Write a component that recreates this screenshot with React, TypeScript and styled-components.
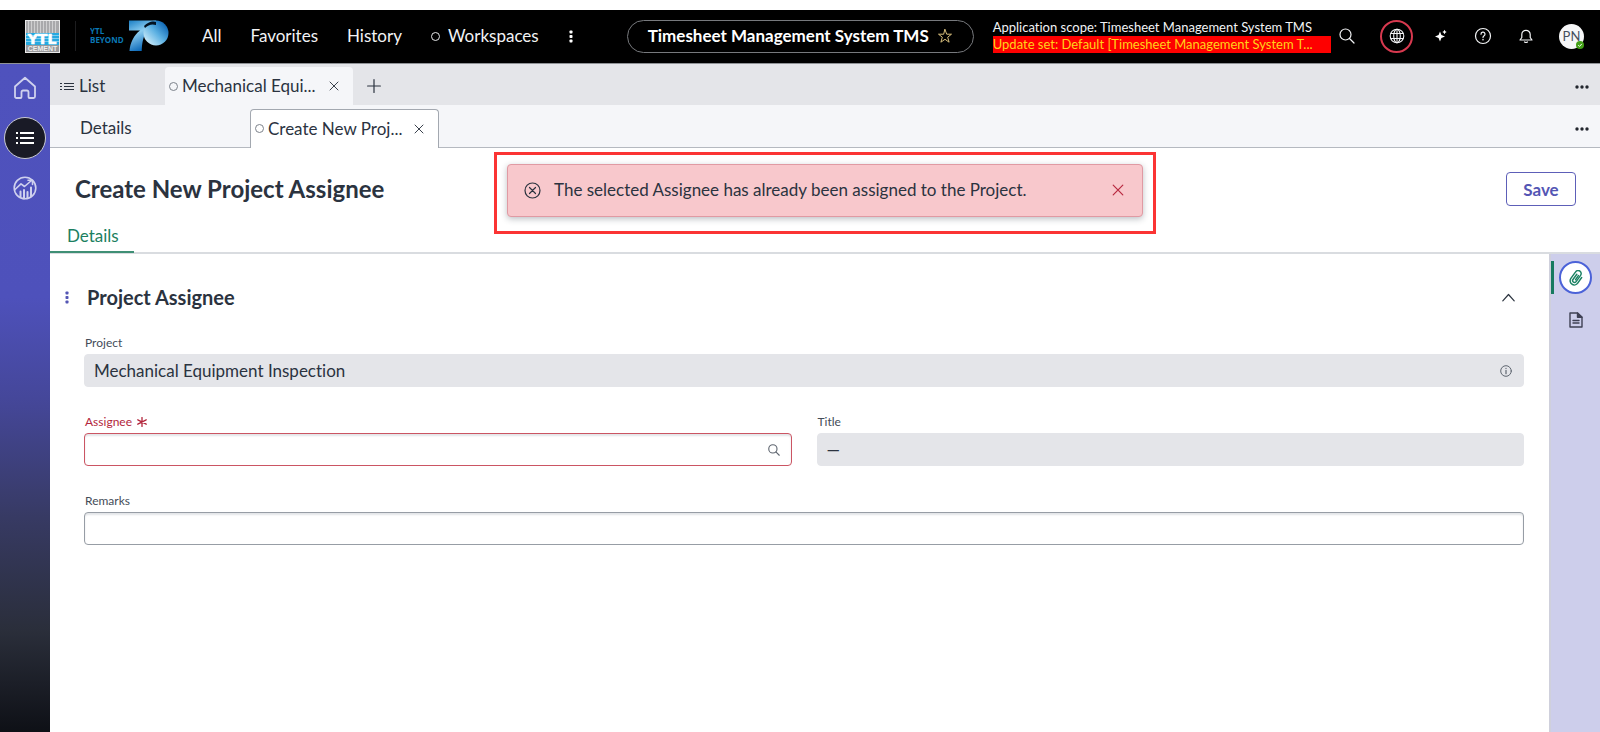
import React from 'react';
import styled, { createGlobalStyle, css } from 'styled-components';

const GlobalStyle = createGlobalStyle`
  *, *::before, *::after { box-sizing: border-box; }
  html, body { margin: 0; background: #fff; }
  body, button, input { font-family: Lato, "Liberation Sans", sans-serif; font-size: 17px; font-variant-ligatures: none; }
  button { margin: 0; padding: 0; border: 0; background: none; color: inherit; cursor: pointer; }
  a { color: inherit; text-decoration: none; }
  h1, h2, p { margin: 0; }
  svg { display: block; flex: none; }
`;

const Page = styled.div`
  display: flex;
  flex-direction: column;
  min-height: 100vh;
  padding-top: 10px;
  color: #2b333f;
  line-height: 20px;
`;

/* Global header */
const Header = styled.header`
  display: flex;
  align-items: center;
  height: 54px;
  padding: 0 16px 1px 25px;
  background: #000;
  border-bottom: 1px solid #8f9296;
  color: #f2f3f5;
  white-space: nowrap;
`;

const LogoDivider = styled.span`
  width: 1px;
  height: 30px;
  margin: 0 14px 0 15px;
  background: #1d1d1f;
`;

const MainNav = styled.nav`
  display: flex;
  align-items: center;
  gap: 29px;
  margin-left: 32px;
`;

const NavLink = styled.a`
  display: flex;
  align-items: center;
  gap: 8px;
`;

const Ring = styled.span<{ $tone: string }>`
  flex: none;
  width: 9px;
  height: 9px;
  border: 1px solid ${(p) => p.$tone};
  border-radius: 50%;
`;

const AppPill = styled.div`
  display: flex;
  align-items: center;
  justify-content: center;
  gap: 8px;
  width: 347px;
  height: 33px;
  margin-left: 53px;
  border: 1px solid #77797d;
  border-radius: 17px;
  color: #fff;
  font-weight: 700;
`;

const Scope = styled.div`
  width: 338px;
  margin-left: 19px;
  font-size: 13px;
  line-height: 17px;
`;

const ScopeLine = styled.p<{ $alert?: boolean }>`
  ${(p) =>
    p.$alert &&
    css`
      background: #fe0000;
      color: #ffd21a;
    `}
`;

const HeaderTools = styled.div`
  display: flex;
  align-items: center;
  flex: 1;
  justify-content: space-between;
  margin-left: 7px;
`;

const ToolButton = styled.button<{ $ringed?: boolean }>`
  display: flex;
  align-items: center;
  justify-content: center;
  width: ${(p) => (p.$ringed ? 33 : 18)}px;
  height: ${(p) => (p.$ringed ? 33 : 18)}px;
  margin-right: ${(p) => (p.$ringed ? -6 : 0)}px;
  border: ${(p) => (p.$ringed ? '2px solid #d8394f' : '0')};
  border-radius: 50%;
`;

const Avatar = styled.button`
  position: relative;
  width: 25px;
  height: 25px;
  border-radius: 50%;
  background: #f6f7f8;
  color: #46505e;
  font-size: 13px;
  line-height: 24px;
`;

const Presence = styled.span`
  position: absolute;
  right: 0;
  bottom: 0;
`;

/* Frame below the header */
const Shell = styled.div`
  display: flex;
  flex: 1;
`;

const Rail = styled.nav`
  display: flex;
  flex: none;
  flex-direction: column;
  align-items: center;
  gap: 8px;
  width: 50px;
  padding-top: 3px;
  background: linear-gradient(#4f52bd 0%, #4e51bb 35%, #45479a 50%, #373a63 68%, #2a2e3a 85%, #0e1016 100%);
`;

const RailLink = styled.a<{ $current?: boolean }>`
  display: flex;
  align-items: center;
  justify-content: center;
  width: 42px;
  height: 42px;
  border: 1px solid ${(p) => (p.$current ? '#c9cad2' : 'transparent')};
  border-radius: 50%;
  background: ${(p) => (p.$current ? '#191a26' : 'transparent')};
  color: ${(p) => (p.$current ? '#fff' : '#cfd1ee')};
`;

const Workspace = styled.main`
  display: flex;
  flex: 1;
  flex-direction: column;
  min-width: 0;
`;

const TabBar = styled.div<{ $nested?: boolean }>`
  display: flex;
  align-items: flex-end;
  height: ${(p) => (p.$nested ? 43 : 41)}px;
  padding-right: 11px;
  background: ${(p) => (p.$nested ? '#f5f6f9' : '#e4e5e9')};
  border-bottom: ${(p) => (p.$nested ? '1px solid #b5b9c0' : '0')};
`;

const Tab = styled.div<{ $active?: boolean; $nested?: boolean; $width: number; $inset: number }>`
  display: flex;
  align-items: center;
  gap: 4px;
  width: ${(p) => p.$width}px;
  height: 38px;
  padding: 0 14px 0 ${(p) => p.$inset}px;
  ${(p) =>
    p.$active &&
    css`
      background: #f5f6f9;
      border-radius: 4px 4px 0 0;
    `}
  ${(p) =>
    p.$active &&
    p.$nested &&
    css`
      height: 39px;
      margin-bottom: -1px;
      padding-bottom: 1px;
      background: #fff;
      border: 1px solid #a3a8b0;
      border-bottom: 0;
    `}
`;

const TabLabel = styled.a`
  flex: 1;
  white-space: nowrap;
`;

const IconButton = styled.button<{ $size: number }>`
  display: flex;
  flex: none;
  align-items: center;
  justify-content: center;
  width: ${(p) => p.$size}px;
  height: ${(p) => p.$size}px;
`;

const AddTab = styled(IconButton)`
  margin: 0 0 7px 9px;
`;

const MoreTabs = styled(IconButton)`
  margin: 0 0 11px auto;
`;

/* Record header */
const RecordHeader = styled.section`
  position: relative;
  border-bottom: 2px solid #d9dce0;
`;

const TitleRow = styled.div`
  display: flex;
  align-items: center;
  justify-content: space-between;
  height: 67px;
  margin-top: 8px;
  padding: 0 24px 1px 25px;
`;

const PageTitle = styled.h1`
  font-size: 24px;
  line-height: 32px;
`;

const SaveButton = styled.button`
  width: 70px;
  height: 34px;
  border: 1px solid #5d5fb8;
  border-radius: 4px;
  color: #5456b4;
  font-weight: 700;
`;

const RecordTab = styled.a`
  display: block;
  width: 84px;
  height: 30px;
  margin-bottom: -1px;
  padding: 3px 17px 0;
  border-bottom: 2px solid #3f8f75;
  color: #1c7f61;
`;

const AlertFrame = styled.div`
  position: absolute;
  top: 4px;
  left: 50%;
  transform: translateX(-50%);
  width: 662px;
  padding: 9px 10px 14px;
  border: 3px solid #fb3434;
`;

const Alert = styled.div`
  display: flex;
  align-items: center;
  height: 53px;
  padding: 0 14px 1px 16px;
  gap: 13px;
  background: #f8c8cc;
  border: 1px solid #e09aa3;
  border-radius: 4px;
  box-shadow: 0 2px 6px rgba(40, 45, 60, 0.3);
`;

const AlertText = styled.p`
  flex: 1;
`;

/* Record body */
const Body = styled.div`
  display: flex;
  flex: 1;
`;

const FormArea = styled.section`
  flex: 1;
  min-width: 0;
  padding: 31px 25px 0 12px;
`;

const SectionHead = styled.div`
  display: flex;
  align-items: center;
  height: 24px;
  padding-right: 6px;
`;

const SectionTitle = styled.h2`
  flex: 1;
  margin-left: 15px;
  font-size: 20px;
  line-height: 24px;
`;

const Fields = styled.form`
  display: grid;
  grid-template-columns: 1fr 1fr;
  gap: 24px 25px;
  margin-top: 23px;
  padding-left: 22px;
`;

const Field = styled.div<{ $wide?: boolean }>`
  position: relative;
  grid-column: ${(p) => (p.$wide ? '1 / -1' : 'auto')};
`;

const Label = styled.label<{ $required?: boolean }>`
  display: flex;
  align-items: center;
  gap: 5px;
  height: 22px;
  padding-left: 1px;
  font-size: 12px;
  line-height: 22px;
  color: ${(p) => (p.$required ? '#b3263c' : '#444c58')};
`;

const TextInput = styled.input<{ $required?: boolean }>`
  display: block;
  width: 100%;
  height: 33px;
  padding: 0 9px;
  border: 1px solid ${(p) => (p.$required ? '#cb5563' : '#979da5')};
  border-radius: 4px;
  outline: 0;
  background: #fff;
  box-shadow: inset 0 2px 2px #e3e5e8;
  color: #2b333f;

  &:read-only {
    border-color: #e4e5e9;
    background: #e4e5e9;
    box-shadow: none;
  }
`;

const FieldIcon = styled.button`
  position: absolute;
  right: 12px;
  bottom: 10px;
  color: #5f6670;
`;

const SideRail = styled.aside`
  display: flex;
  flex: none;
  flex-direction: column;
  align-items: flex-end;
  gap: 9px;
  width: 51px;
  padding: 7px 8px 0 0;
  background: #cdceeb;
  border-left: 2px solid #cfd0dc;
`;

const SideItem = styled.div<{ $active?: boolean }>`
  display: flex;
  align-items: center;
  justify-content: flex-end;
  width: 41px;
  border-left: 3px solid ${(p) => (p.$active ? '#177a60' : 'transparent')};
`;

const SideButton = styled.button<{ $active?: boolean }>`
  display: flex;
  align-items: center;
  justify-content: center;
  width: 33px;
  height: 33px;
  border: 2px solid ${(p) => (p.$active ? '#4b62d8' : 'transparent')};
  border-radius: 50%;
  background: ${(p) => (p.$active ? '#fff' : 'transparent')};
`;

/* Drawings */
const CementLogo = () => (
  <svg width="35" height="33" viewBox="0 0 35 33" role="img" aria-label="YTL Cement">
    <rect width="35" height="33" fill="#e9e9e9" />
    <rect x="1" y="1" width="33" height="12" fill="#a9a9ab" />
    {[3, 6, 9, 12, 15, 18, 21, 24, 27, 30].map((x) => (
      <rect key={x} x={x} y="1" width="1" height="12" fill="#cfcfd0" />
    ))}
    <rect x="1" y="13" width="33" height="12" fill="#25a9e0" />
    {[15, 18, 21].map((y) => (
      <rect key={y} x="1" y={y} width="33" height="1" fill="#7fcdee" />
    ))}
    <text x="17" y="24" textAnchor="middle" fill="#fff" stroke="#fff" strokeWidth="0.6" fontFamily="DejaVu Sans, sans-serif" fontWeight="700" fontSize="14">YTL</text>
    <rect x="1" y="25" width="33" height="7" fill="#98989a" />
    <text x="17.500" y="31" textAnchor="middle" fill="#ededed" fontFamily="Liberation Sans, sans-serif" fontWeight="700" fontSize="7">CEMENT</text>
  </svg>
);

const BeyondLogo = () => (
  <svg width="80" height="34" viewBox="0 0 80 34" role="img" aria-label="YTL Beyond 70">
    <defs>
      <linearGradient id="seven" x1="0" y1="0" x2="0.4" y2="1">
        <stop offset="0" stopColor="#1a7ec4" />
        <stop offset="0.45" stopColor="#8ccdf0" />
        <stop offset="1" stopColor="#0a68b8" />
      </linearGradient>
      <linearGradient id="zero" x1="0.2" y1="0.9" x2="0.95" y2="0.2">
        <stop offset="0" stopColor="#c4e7f8" />
        <stop offset="0.5" stopColor="#5bb0e2" />
        <stop offset="1" stopColor="#0c65b4" />
      </linearGradient>
    </defs>
    <text x="0" y="15" fill="#0a78b5" fontFamily="Open Sans, sans-serif" fontWeight="700" fontSize="8">YTL</text>
    <text x="0" y="24" fill="#0a78b5" fontFamily="Open Sans, sans-serif" fontWeight="700" fontSize="8">BEYOND</text>
    <path d="M39 1.500H66V6L56 14C52.500 19 52 26 51.700 32H39.500C40 24 44 16 50 11.500H39Z" fill="url(#seven)" />
    <circle cx="66" cy="14" r="12.500" fill="url(#zero)" />
    <path d="M54 7Q60 1 66 3V6Q60 4 55 9Z" fill="#02111f" />
  </svg>
);

const line = { fill: 'none', stroke: 'currentColor', strokeLinecap: 'round', strokeLinejoin: 'round' } as const;

const DotsVertical = ({ color = '#fff', height = 13 }: { color?: string; height?: number }) => (
  <svg width="4" height={height} viewBox="0 0 4 13" fill={color}>
    <rect x="0.500" y="0.500" width="3" height="3" rx="0.800" />
    <rect x="0.500" y="5" width="3" height="3" rx="0.800" />
    <rect x="0.500" y="9.500" width="3" height="3" rx="0.800" />
  </svg>
);

const DotsHorizontal = () => (
  <svg width="14" height="4" viewBox="0 0 14 4" fill="#22262e">
    <circle cx="2" cy="2" r="1.700" />
    <circle cx="7" cy="2" r="1.700" />
    <circle cx="12" cy="2" r="1.700" />
  </svg>
);

const Star = () => (
  <svg width="16" height="16" viewBox="0 0 16 16" {...line} stroke="#d8bf7c">
    <path d="M8 1.500L9.700 6.200H14.500L10.700 9.200L12.100 14.200L8 11.300L3.900 14.200L5.300 9.200L1.500 6.200H6.300Z" />
  </svg>
);

const Magnifier = ({ size = 16, width = 1.2 }: { size?: number; width?: number }) => (
  <svg width={size} height={size} viewBox="0 0 16 16" {...line} strokeWidth={width}>
    <circle cx="6.500" cy="6.500" r="5.500" />
    <path d="M10.500 10.500L15 15" />
  </svg>
);

const Globe = () => (
  <svg width="16" height="16" viewBox="0 0 16 16" {...line} strokeWidth="1.1">
    <circle cx="8" cy="8" r="6.800" />
    <ellipse cx="8" cy="8" rx="3.300" ry="6.800" />
    <path d="M2 5.500H14M2 10.500H14M8 1.200V14.800" />
  </svg>
);

const Sparkle = () => (
  <svg width="14" height="14" viewBox="0 0 14 14" fill="#fff">
    <path d="M6 2.500L7.400 6.100L11 7.500L7.400 8.900L6 12.500L4.600 8.900L1 7.500L4.600 6.100Z" />
    <path d="M10.500 0.800L11.300 2.200L12.700 3L11.300 3.800L10.500 5.200L9.700 3.800L8.300 3L9.700 2.200Z" />
  </svg>
);

const Help = () => (
  <svg width="18" height="18" viewBox="0 0 18 18" {...line} strokeWidth="1.200">
    <circle cx="9" cy="9" r="7.500" />
    <path d="M7 7.200A2 2 0 1 1 9.900 8.900C9.200 9.300 9 9.600 9 10.500" />
    <circle cx="9" cy="12.600" r="0.300" />
  </svg>
);

const Bell = () => (
  <svg width="16" height="16" viewBox="0 0 16 16" {...line} strokeWidth="1.200">
    <path d="M3.800 9.500V6.500A4.200 4.200 0 0 1 12.200 6.500V9.500L14 12H2Z" />
    <path d="M6.500 14Q8 15 9.500 14" />
  </svg>
);

const Cross = ({ size, color }: { size: number; color: string }) => (
  <svg width={size} height={size} viewBox="0 0 10 10" {...line} stroke={color} strokeWidth="1">
    <path d="M1 1L9 9M9 1L1 9" />
  </svg>
);

const Plus = () => (
  <svg width="14" height="14" viewBox="0 0 14 14" {...line} strokeWidth="1.200">
    <path d="M7 0.600V13.400M0.600 7H13.400" />
  </svg>
);

const ListIcon = ({ width, rows, weight }: { width: number; rows: number[]; weight: number }) => (
  <svg width={width} height="15" viewBox={`0 0 ${width} 15`} {...line} strokeLinecap="butt" strokeWidth={weight}>
    {rows.map((y) => (
      <path key={y} d={`M0 ${y}H2M4 ${y}H${width - 1}`} />
    ))}
  </svg>
);

const Home = () => (
  <svg width="24" height="24" viewBox="0 0 24 24" {...line} strokeWidth="1.800">
    <path d="M2 10.500L12 1.800L22 10.500V20.500A1.500 1.500 0 0 1 20.500 22H16.500A1 1 0 0 1 15.500 21V16A1.500 1.500 0 0 0 14 14.500H10A1.500 1.500 0 0 0 8.500 16V21A1 1 0 0 1 7.500 22H3.500A1.500 1.500 0 0 1 2 20.500Z" />
  </svg>
);

const Analytics = () => (
  <svg width="24" height="24" viewBox="0 0 24 24" {...line} strokeWidth="1.600">
    <circle cx="12" cy="12" r="10.800" />
    <path d="M2 13.500L8 7.800L11.500 10.500L18.500 4.500M15 4.200H19.500V8.500" />
    <path d="M7.500 15.500V21M11 14V22.500M14.500 16V22M18 11.500V20" strokeWidth="2" />
  </svg>
);

const ErrorIcon = () => (
  <svg width="17" height="17" viewBox="0 0 17 17" {...line} strokeWidth="1.200">
    <circle cx="8.500" cy="8.500" r="7.500" />
    <path d="M5.500 5.500L11.500 11.500M11.500 5.500L5.500 11.500" />
  </svg>
);

const Chevron = () => (
  <svg width="13" height="9" viewBox="0 0 13 9" {...line} strokeWidth="1.200">
    <path d="M0.800 7.800L6.500 1.500L12.200 7.800" />
  </svg>
);

const Info = () => (
  <svg width="12" height="12" viewBox="0 0 12 12" {...line}>
    <circle cx="6" cy="6" r="5.300" />
    <path d="M6 5.300V8.700M6 3.300V3.500" strokeWidth="1.200" />
  </svg>
);

const Asterisk = () => (
  <svg width="10" height="10" viewBox="0 0 10 10" {...line} strokeWidth="1.300">
    <path d="M5 0.500V9.500M0.800 2.800L9.200 7.200M9.200 2.800L0.800 7.200" />
  </svg>
);

const Paperclip = () => (
  <svg width="16" height="16" viewBox="0 0 24 24" {...line} stroke="#1c8263" strokeWidth="2.200">
    <g transform="rotate(-8 12 12)">
      <path d="M20.500 12.500L13.500 20A6.200 6.200 0 0 1 4.300 11.600L12.400 3.100A4.600 4.600 0 1 1 19 9.400L11.400 17.400A2.800 2.800 0 0 1 7.200 13.600L14 6.600" />
      <path d="M11 14.500L16 9" />
    </g>
  </svg>
);

const Document = () => (
  <svg width="14" height="16" viewBox="0 0 14 16" {...line} stroke="#3f4154" strokeWidth="1.400">
    <path d="M1 1H8.500L13 5.200V15H1Z" />
    <path d="M8.500 1V5.200H13Z" fill="#3f4154" />
    <path d="M4 8.500H10M4 11H10" />
  </svg>
);

const PresenceMark = () => (
  <svg width="8" height="8" viewBox="0 0 8 8">
    <circle cx="4" cy="4" r="4" fill="#43a017" />
    <path d="M2.200 4.200L3.500 5.400L5.800 2.900" fill="none" stroke="#fff" />
  </svg>
);

export default function App() {
  return (
    <Page>
      <GlobalStyle />
      <Header>
        <CementLogo />
        <LogoDivider />
        <BeyondLogo />
        <MainNav aria-label="Main">
          <NavLink href="#all">All</NavLink>
          <NavLink href="#favorites">Favorites</NavLink>
          <NavLink href="#history">History</NavLink>
          <NavLink href="#workspaces">
            <Ring $tone="#e6e7e9" />
            Workspaces
          </NavLink>
          <IconButton $size={6} aria-label="More menus">
            <DotsVertical />
          </IconButton>
        </MainNav>
        <AppPill>
          Timesheet Management System TMS
          <IconButton $size={16} aria-label="Add to favorites">
            <Star />
          </IconButton>
        </AppPill>
        <Scope>
          <ScopeLine>Application scope: Timesheet Management System TMS</ScopeLine>
          <ScopeLine $alert>Update set: Default [Timesheet Management System T...</ScopeLine>
        </Scope>
        <HeaderTools>
          <ToolButton aria-label="Search"><Magnifier /></ToolButton>
          <ToolButton $ringed aria-label="Scope settings"><Globe /></ToolButton>
          <ToolButton aria-label="Assistant"><Sparkle /></ToolButton>
          <ToolButton aria-label="Help"><Help /></ToolButton>
          <ToolButton aria-label="Notifications"><Bell /></ToolButton>
          <Avatar>
            PN
            <Presence><PresenceMark /></Presence>
          </Avatar>
        </HeaderTools>
      </Header>

      <Shell>
        <Rail aria-label="Workspace">
          <RailLink href="#home" aria-label="Home"><Home /></RailLink>
          <RailLink href="#list" aria-label="List" $current>
            <ListIcon width={19} rows={[2, 7, 12]} weight={2} />
          </RailLink>
          <RailLink href="#analytics" aria-label="Analytics"><Analytics /></RailLink>
        </Rail>

        <Workspace>
          <TabBar>
            <Tab $width={115} $inset={10}>
              <ListIcon width={15} rows={[4.5, 7.5, 10.5]} weight={1} />
              <TabLabel href="#list">List</TabLabel>
            </Tab>
            <Tab $active $width={188} $inset={4}>
              <Ring $tone="#7c828b" />
              <TabLabel href="#equipment">Mechanical Equi...</TabLabel>
              <IconButton $size={10} aria-label="Close tab"><Cross size={10} color="#3b424d" /></IconButton>
            </Tab>
            <AddTab $size={24} aria-label="New tab"><Plus /></AddTab>
            <MoreTabs $size={14} aria-label="More tabs"><DotsHorizontal /></MoreTabs>
          </TabBar>
          <TabBar $nested>
            <Tab $nested $width={200} $inset={30}>
              <TabLabel href="#details">Details</TabLabel>
            </Tab>
            <Tab $active $nested $width={189} $inset={4}>
              <Ring $tone="#7c828b" />
              <TabLabel href="#create">Create New Proj...</TabLabel>
              <IconButton $size={10} aria-label="Close tab"><Cross size={10} color="#3b424d" /></IconButton>
            </Tab>
            <MoreTabs $size={14} aria-label="More subtabs"><DotsHorizontal /></MoreTabs>
          </TabBar>

          <RecordHeader>
            <TitleRow>
              <PageTitle>Create New Project Assignee</PageTitle>
              <SaveButton>Save</SaveButton>
            </TitleRow>
            <RecordTab href="#record">Details</RecordTab>
            <AlertFrame>
              <Alert role="alert">
                <ErrorIcon />
                <AlertText>The selected Assignee has already been assigned to the Project.</AlertText>
                <IconButton $size={20} aria-label="Dismiss"><Cross size={12} color="#b8283f" /></IconButton>
              </Alert>
            </AlertFrame>
          </RecordHeader>

          <Body>
            <FormArea>
              <SectionHead>
                <IconButton $size={10} aria-label="Section options">
                  <DotsVertical color="#5456b4" />
                </IconButton>
                <SectionTitle>Project Assignee</SectionTitle>
                <IconButton $size={20} aria-label="Collapse section"><Chevron /></IconButton>
              </SectionHead>
              <Fields>
                <Field $wide>
                  <Label htmlFor="project">Project</Label>
                  <TextInput id="project" readOnly defaultValue="Mechanical Equipment Inspection" />
                  <FieldIcon type="button" aria-label="Project details"><Info /></FieldIcon>
                </Field>
                <Field>
                  <Label htmlFor="assignee" $required>
                    Assignee
                    <Asterisk />
                  </Label>
                  <TextInput id="assignee" required $required />
                  <FieldIcon type="button" aria-label="Look up assignee"><Magnifier size={12} width={1.5} /></FieldIcon>
                </Field>
                <Field>
                  <Label htmlFor="title">Title</Label>
                  <TextInput id="title" readOnly defaultValue="—" />
                </Field>
                <Field $wide>
                  <Label htmlFor="remarks">Remarks</Label>
                  <TextInput id="remarks" />
                </Field>
              </Fields>
            </FormArea>
            <SideRail aria-label="Record tools">
              <SideItem $active>
                <SideButton $active aria-label="Attachments"><Paperclip /></SideButton>
              </SideItem>
              <SideItem>
                <SideButton aria-label="Templates"><Document /></SideButton>
              </SideItem>
            </SideRail>
          </Body>
        </Workspace>
      </Shell>
    </Page>
  );
}
